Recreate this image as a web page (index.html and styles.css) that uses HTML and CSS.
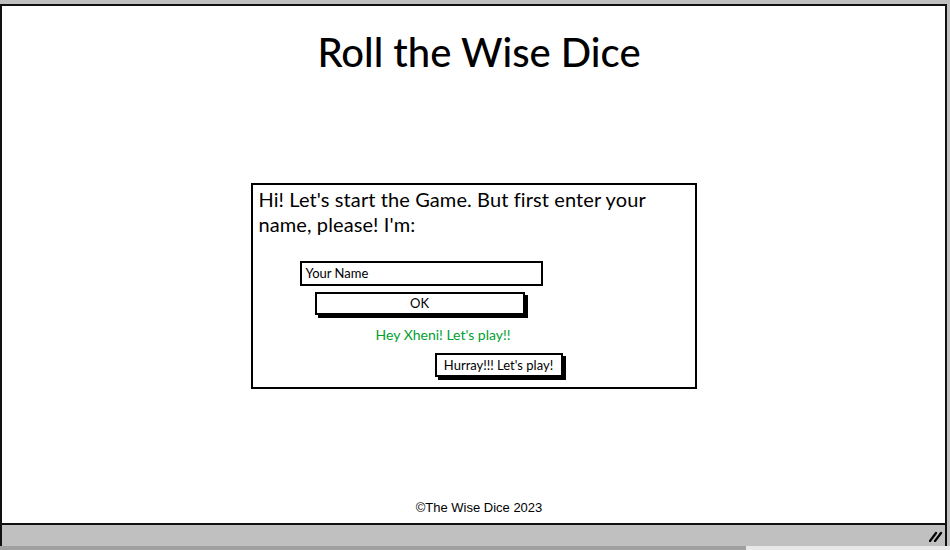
FILE: index.html
```html
<!DOCTYPE html>
<html>
<head>
<meta charset="utf-8">
<title>Roll the Wise Dice</title>
<link rel="stylesheet" href="styles.css">
</head>
<body>
<div class="top-strip"></div>
<div class="window">
  <main class="page">
    <h1 class="title">Roll the Wise Dice</h1>
    <section class="dialog">
      <p class="prompt">Hi! Let's start the Game. But first enter your name, please! I'm:</p>
      <div class="name-input">Your Name</div>
      <div class="btn btn-ok">OK</div>
      <p class="greeting">Hey Xheni! Let's play!!</p>
      <div class="btn btn-play">Hurray!!! Let's play!</div>
    </section>
    <footer class="footer">©The Wise Dice 2023</footer>
  </main>
  <div class="statusbar">
    <svg class="grip" width="14" height="12" viewBox="0 0 14 12">
      <path d="M1 11 L7 3" stroke="#000" stroke-width="2.2" stroke-linecap="round"/>
      <path d="M6 11 L12 3" stroke="#000" stroke-width="2.2" stroke-linecap="round"/>
    </svg>
  </div>
</div>
<div class="hscroll">
  <div class="hscroll-thumb"></div>
  <div class="hscroll-track"></div>
</div>
</body>
</html>
```
FILE: styles.css
```css
html, body {
  margin: 0;
  padding: 0;
}
body {
  width: 950px;
  height: 550px;
  overflow: hidden;
  background: #c0c0c0;
  font-family: Lato, "Noto Sans", sans-serif;
  color: #000;
}
.top-strip {
  height: 4px;
  background: #c0c0c0;
}
.window {
  width: 943px;
  height: 540px;
  border: 2px solid #111;
  border-bottom: none;
  display: flex;
  flex-direction: column;
}
.page {
  height: 517px;
  background: #fff;
  border-bottom: 2px solid #111;
  display: flex;
  flex-direction: column;
  align-items: center;
}
.title {
  margin: 22px 0 0 11px;
  font-size: 40px;
  font-weight: 500;
  line-height: 48px;
}
.dialog {
  margin-top: 107px;
  width: 436px;
  height: 202px;
  border: 2px solid #000;
  padding: 0 2px 0 4px;
  box-sizing: content-box;
  display: flex;
  flex-direction: column;
  align-items: flex-start;
}
.prompt {
  margin: 2px 0 0 2px;
  font-size: 20px;
  line-height: 25px;
  letter-spacing: 0.1px;
  width: 420px;
}
.name-input {
  margin: 24px 0 0 43px;
  width: 235px;
  height: 21px;
  border: 2px solid #000;
  font-size: 13px;
  line-height: 21px;
  padding-left: 4px;
  box-sizing: content-box;
}
.btn {
  border: 2px solid #000;
  box-shadow: 3px 3px 0 #000;
  background: #fff;
  font-size: 13px;
  text-align: center;
}
.btn-ok {
  margin: 6px 0 0 58px;
  width: 206px;
  height: 19px;
  line-height: 19px;
}
.greeting {
  margin: 12px 0 0 119px;
  font-size: 14px;
  line-height: 16px;
  color: #00a030;
}
.btn-play {
  margin: 10px 0 0 178px;
  width: 124px;
  height: 20px;
  line-height: 20px;
}
.footer {
  margin-top: auto;
  margin-bottom: 7px;
  margin-left: 11px;
  font-family: "Liberation Sans", Arial, sans-serif;
  font-size: 13px;
  line-height: 16px;
}
.statusbar {
  flex: 1;
  background: #c0c0c0;
  display: flex;
  justify-content: flex-end;
  align-items: center;
  padding-right: 2px;
}
.grip {
  display: block;
}
.hscroll {
  height: 4px;
  display: flex;
}
.hscroll-thumb {
  width: 746px;
  background: #a0a0a0;
}
.hscroll-track {
  flex: 1;
  background: #e8e8e8;
}
```
